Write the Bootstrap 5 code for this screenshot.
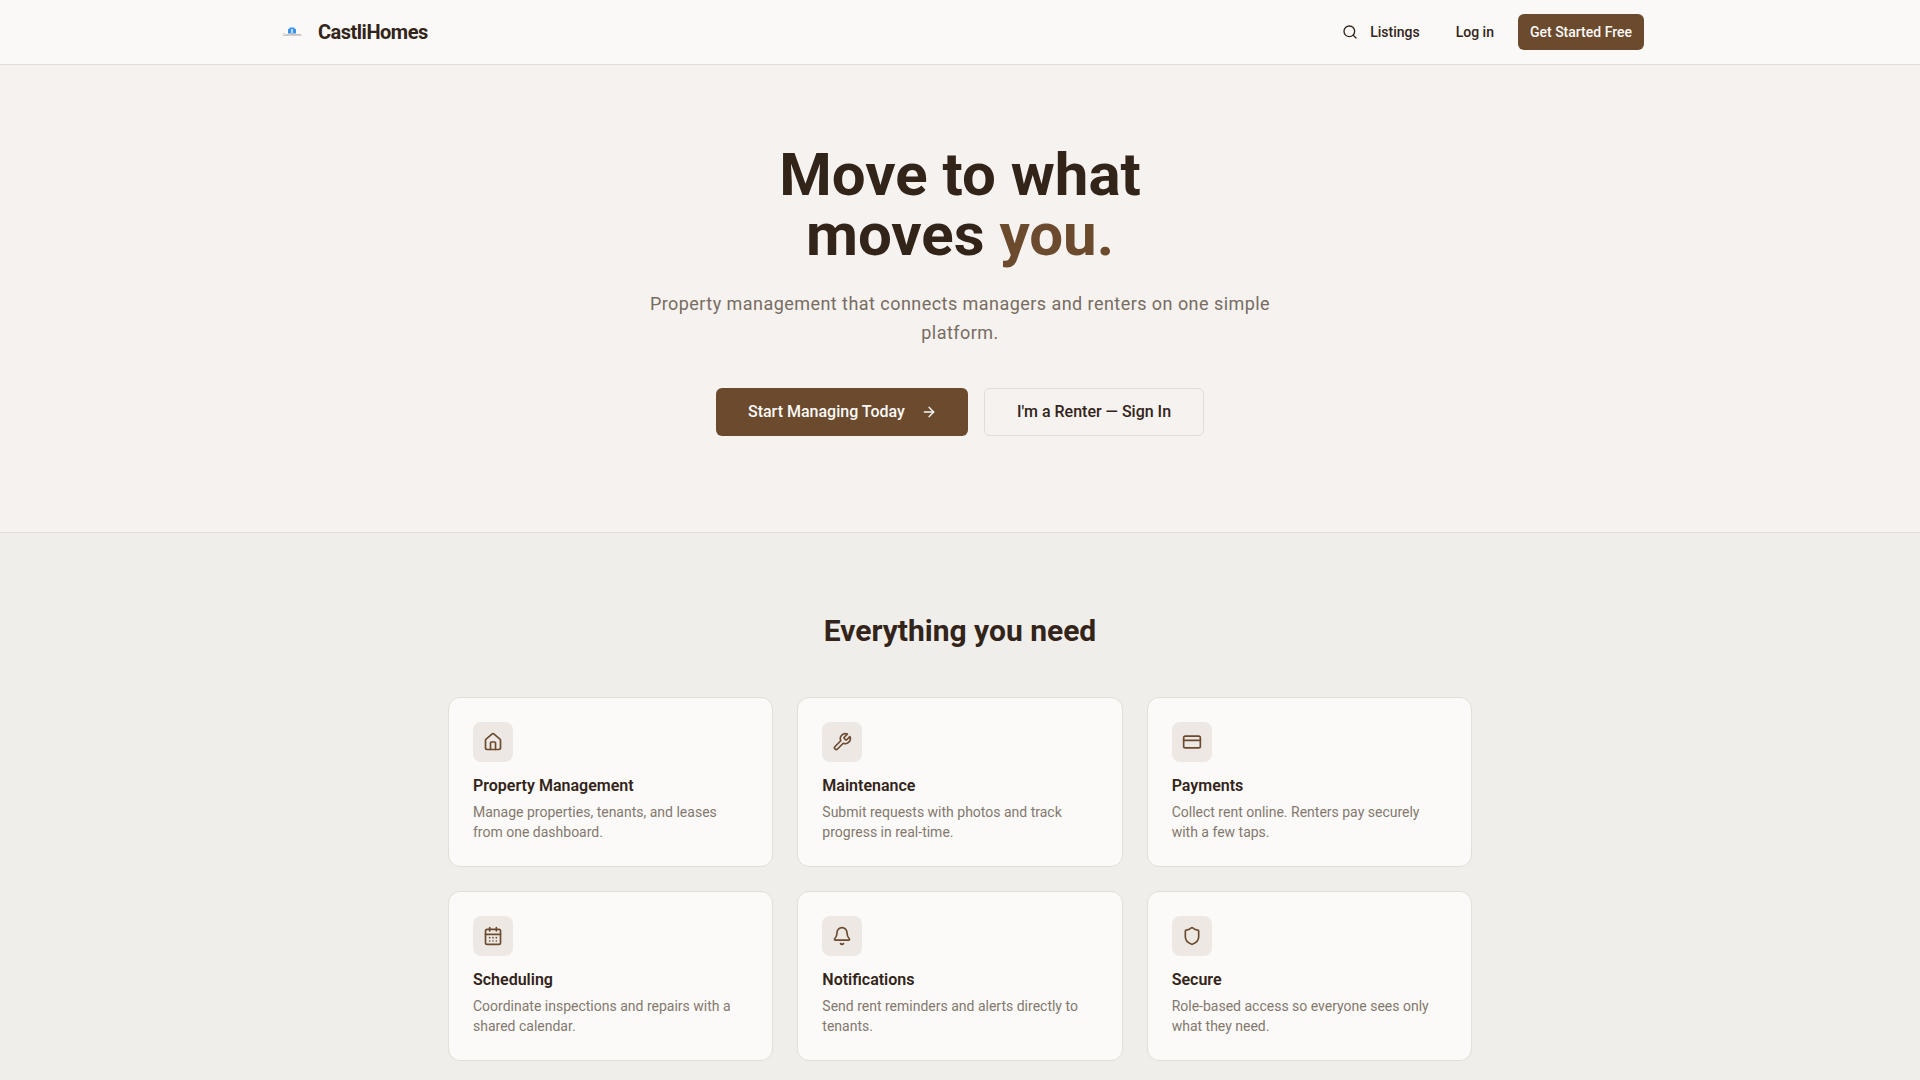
<!DOCTYPE html>
<html lang="en">
<head>
  <meta charset="UTF-8">
  <meta name="viewport" content="width=device-width, initial-scale=1.0">
  <title>CastliHomes</title>
  <link href="https://cdn.jsdelivr.net/npm/bootstrap@5.3.0/dist/css/bootstrap.min.css" rel="stylesheet">
  <style>
    body { font-family: Roboto, "Liberation Sans", sans-serif; background: #f0eeeb; color: #33241a; -webkit-font-smoothing: antialiased; }
    .top-bar { background: #faf9f7; border-bottom: 1px solid #e2ddd6; height: 65px; padding: 0; }
    .top-inner { width: 1368px; }
    .brand-link { gap: 10px; }
    .brand-name { font-size: 20px; font-weight: 700; letter-spacing: -0.5px; color: #33241a; }
    .brand-logo { width: 32px; height: 32px; display: block; }
    .nav-search { width: 16px; height: 16px; color: #33241a; }
    .nav-ghost { font-size: 14px; font-weight: 500; color: #33241a; padding: 0 12px; height: 36px; line-height: 36px; border: 0; }
    .nav-cta { font-size: 14px; font-weight: 500; background: #6b4a2e; color: #faf9f7; height: 36px; line-height: 36px; padding: 0 12px; border: 0; border-radius: 6px; }
    .hero-band { background: #f5f2ef; border-bottom: 1px solid #e2ddd6; height: 468px; padding-top: 80px; }
    .hero-title { font-size: 60px; line-height: 60px; font-weight: 700; letter-spacing: 0; margin-bottom: 24px; color: #33241a; }
    .hero-title span { color: #6b4a2e; }
    .hero-sub { font-size: 18px; line-height: 29.25px; letter-spacing: 0.45px; color: #786c62; width: 640px; margin: 0 auto 40px; }
    .btn-main { background: #6b4a2e; color: #faf9f7; font-size: 16px; font-weight: 500; height: 48px; padding: 0 31.5px; border: 0; border-radius: 6px; }
    .btn-line { background: transparent; color: #33241a; font-size: 16px; font-weight: 500; height: 48px; padding: 0 31.5px; border: 1px solid #e2ddd6; border-radius: 6px; }
    .btn-main:hover { background: #5d4027; color: #faf9f7; }
    .feat-band { padding: 80px 0; }
    .feat-heading { font-size: 30px; line-height: 36px; font-weight: 700; color: #33241a; margin-bottom: 48px; }
    .feat-wrap { width: 1024px; }
    .feat-card { background: #fbfaf8; border: 1px solid #e2ddd6; border-radius: 12px; padding: 24px; }
    .feat-icon { width: 40px; height: 40px; background: #ede8e4; border-radius: 8px; color: #6b4a2e; margin-bottom: 12px; }
    .feat-title { font-size: 16px; line-height: 24px; font-weight: 600; color: #33241a; margin-bottom: 4px; }
    .feat-text { font-size: 14px; line-height: 20px; color: #83786e; margin: 0; }
  </style>
</head>
<body>

  <!-- top bar -->
  <nav class="navbar top-bar">
    <div class="top-inner mx-auto d-flex align-items-center justify-content-between">
      <a class="d-flex align-items-center brand-link text-decoration-none brand-name" href="#">
        <svg class="brand-logo" viewBox="-4 -4 32 32">
          <path d="M8 13.5V9.2l1.6-.7V7.4h4.8v1.1l1.6.7v4.3z" fill="#3b93e8"/>
          <rect x="11.2" y="9" width="1.6" height="4.5" fill="#dcebfa"/>
          <text x="12" y="16" font-size="3.2" font-weight="400" letter-spacing="0" text-anchor="middle" fill="#8a837c" font-family="Roboto">CastliHomes</text>
        </svg>
        CastliHomes
      </a>
      <div class="d-flex align-items-center">
        <svg class="nav-search" viewBox="0 0 24 24" fill="none" stroke="currentColor" stroke-width="2" stroke-linecap="round" stroke-linejoin="round"><circle cx="11" cy="11" r="8"/><path d="m21 21-4.3-4.3"/></svg>
        <a class="btn nav-ghost me-2" href="#">Listings</a>
        <a class="btn nav-ghost ms-1 me-2" href="#">Log in</a>
        <a class="btn nav-cta ms-1" href="#">Get Started Free</a>
      </div>
    </div>
  </nav>

  <!-- hero -->
  <section class="hero-band text-center">
    <h1 class="hero-title">Move to what<br>moves <span>you.</span></h1>
    <p class="hero-sub">Property management that connects managers and renters on one simple platform.</p>
    <div class="d-flex justify-content-center gap-3">
      <a class="btn btn-main d-inline-flex align-items-center" href="#">
        Start Managing Today
        <svg class="ms-3" width="16" height="16" viewBox="0 0 24 24" fill="none" stroke="currentColor" stroke-width="2" stroke-linecap="round" stroke-linejoin="round"><path d="M5 12h14"/><path d="m12 5 7 7-7 7"/></svg>
      </a>
      <a class="btn btn-line d-inline-flex align-items-center" href="#">I'm a Renter — Sign In</a>
    </div>
  </section>

  <!-- features -->
  <section class="feat-band">
    <h2 class="feat-heading text-center">Everything you need</h2>
    <div class="feat-wrap mx-auto">
      <div class="row g-4">

        <div class="col-4">
          <div class="feat-card">
            <div class="feat-icon d-flex align-items-center justify-content-center">
              <svg width="20" height="20" viewBox="0 0 24 24" fill="none" stroke="currentColor" stroke-width="2" stroke-linecap="round" stroke-linejoin="round"><path d="M15 21v-8a1 1 0 0 0-1-1h-4a1 1 0 0 0-1 1v8"/><path d="M3 10a2 2 0 0 1 .709-1.528l7-5.999a2 2 0 0 1 2.582 0l7 5.999A2 2 0 0 1 21 10v9a2 2 0 0 1-2 2H5a2 2 0 0 1-2-2z"/></svg>
            </div>
            <div class="feat-title">Property Management</div>
            <p class="feat-text">Manage properties, tenants, and leases from one dashboard.</p>
          </div>
        </div>

        <div class="col-4">
          <div class="feat-card">
            <div class="feat-icon d-flex align-items-center justify-content-center">
              <svg width="20" height="20" viewBox="0 0 24 24" fill="none" stroke="currentColor" stroke-width="2" stroke-linecap="round" stroke-linejoin="round"><path d="M14.7 6.3a1 1 0 0 0 0 1.4l1.6 1.6a1 1 0 0 0 1.4 0l3.77-3.77a6 6 0 0 1-7.94 7.94l-6.91 6.91a2.12 2.12 0 0 1-3-3l6.91-6.91a6 6 0 0 1 7.94-7.94l-3.76 3.76z"/></svg>
            </div>
            <div class="feat-title">Maintenance</div>
            <p class="feat-text">Submit requests with photos and track progress in real-time.</p>
          </div>
        </div>

        <div class="col-4">
          <div class="feat-card">
            <div class="feat-icon d-flex align-items-center justify-content-center">
              <svg width="20" height="20" viewBox="0 0 24 24" fill="none" stroke="currentColor" stroke-width="2" stroke-linecap="round" stroke-linejoin="round"><rect width="20" height="14" x="2" y="5" rx="2"/><line x1="2" x2="22" y1="10" y2="10"/></svg>
            </div>
            <div class="feat-title">Payments</div>
            <p class="feat-text">Collect rent online. Renters pay securely with a few taps.</p>
          </div>
        </div>

        <div class="col-4">
          <div class="feat-card">
            <div class="feat-icon d-flex align-items-center justify-content-center">
              <svg width="20" height="20" viewBox="0 0 24 24" fill="none" stroke="currentColor" stroke-width="2" stroke-linecap="round" stroke-linejoin="round"><path d="M8 2v4"/><path d="M16 2v4"/><rect width="18" height="18" x="3" y="4" rx="2"/><path d="M3 10h18"/><path d="M8 14h.01"/><path d="M12 14h.01"/><path d="M16 14h.01"/><path d="M8 18h.01"/><path d="M12 18h.01"/><path d="M16 18h.01"/></svg>
            </div>
            <div class="feat-title">Scheduling</div>
            <p class="feat-text">Coordinate inspections and repairs with a shared calendar.</p>
          </div>
        </div>

        <div class="col-4">
          <div class="feat-card">
            <div class="feat-icon d-flex align-items-center justify-content-center">
              <svg width="20" height="20" viewBox="0 0 24 24" fill="none" stroke="currentColor" stroke-width="2" stroke-linecap="round" stroke-linejoin="round"><path d="M10.268 21a2 2 0 0 0 3.464 0"/><path d="M3.262 15.326A1 1 0 0 0 4 17h16a1 1 0 0 0 .74-1.673C19.41 13.956 18 12.499 18 8A6 6 0 0 0 6 8c0 4.499-1.411 5.956-2.738 7.326"/></svg>
            </div>
            <div class="feat-title">Notifications</div>
            <p class="feat-text">Send rent reminders and alerts directly to tenants.</p>
          </div>
        </div>

        <div class="col-4">
          <div class="feat-card">
            <div class="feat-icon d-flex align-items-center justify-content-center">
              <svg width="20" height="20" viewBox="0 0 24 24" fill="none" stroke="currentColor" stroke-width="2" stroke-linecap="round" stroke-linejoin="round"><path d="M20 13c0 5-3.5 7.5-7.66 8.95a1 1 0 0 1-.67-.01C7.5 20.5 4 18 4 13V6a1 1 0 0 1 1-1c2 0 4.5-1.2 6.24-2.72a1.17 1.17 0 0 1 1.52 0C14.51 3.81 17 5 19 5a1 1 0 0 1 1 1z"/></svg>
            </div>
            <div class="feat-title">Secure</div>
            <p class="feat-text">Role-based access so everyone sees only what they need.</p>
          </div>
        </div>

      </div>
    </div>
  </section>

  <script src="https://cdn.jsdelivr.net/npm/bootstrap@5.3.0/dist/js/bootstrap.bundle.min.js"></script>
</body>
</html>
